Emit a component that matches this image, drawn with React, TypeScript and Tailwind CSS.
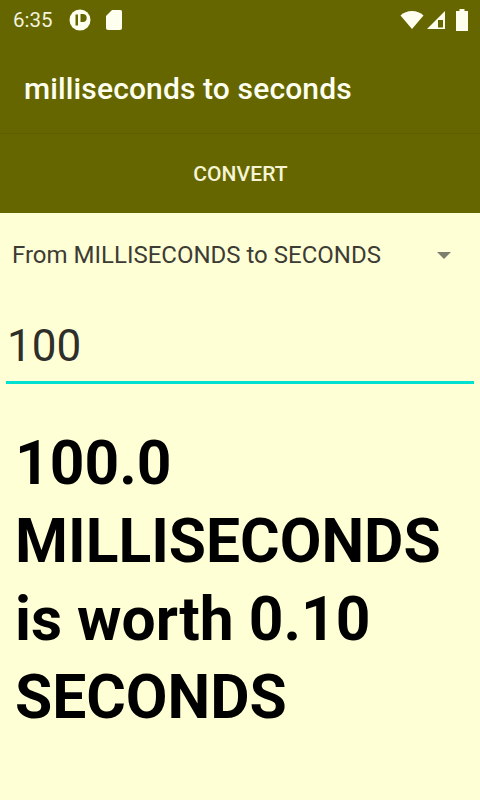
import { useState } from 'react';

const ROBOTO = "font-['Roboto',sans-serif]";

function StatusBar() {
  return (
    <div className="flex h-[40px] items-center justify-between pl-[12px] pr-[11px]">
      <div className="flex items-center">
        <span className="pl-[1px] text-[20.500px] leading-none text-[#f3f3df]">6:35</span>
        <svg className="ml-[16px]" width="22" height="22" viewBox="0 0 22 22">
          <circle cx="11" cy="11" r="10.500" fill="#fffff0" />
          <path d="M6.500 5.500h2.500v11H6.500z" fill="#666600" />
          <path d="M11.500 5h2.200a4 4 0 0 1 0 8h-2.200z" fill="#666600" />
        </svg>
        <svg className="ml-[14px]" width="18" height="22" viewBox="0 0 18 22">
          <path d="M7 1h8.500A1.500 1.500 0 0 1 17 2.500V19a2 2 0 0 1-2 2H3a2 2 0 0 1-2-2V7z" fill="#fffff0" />
        </svg>
      </div>
      <div className="flex items-center">
        <svg width="24" height="20" viewBox="0 0 24 20">
          <path d="M0.500 5.500C3.500 2.500 7.500 1 12 1s8.500 1.500 11.500 4.500L12 19z" fill="#fffff0" />
        </svg>
        <svg className="ml-[2px]" width="20" height="20" viewBox="0 0 20 20">
          <path d="M1 19 19 1v18z" fill="#fffff0" />
          <path d="M12 10h5v7.500h-5z" fill="#666600" />
        </svg>
        <svg className="ml-[9px]" width="14" height="24" viewBox="0 0 14 24">
          <path d="M4.500 1h5v2H13v20H1V3h3.500z" fill="#fffff0" />
        </svg>
      </div>
    </div>
  );
}

export default function App() {
  const [value, setValue] = useState('100');

  return (
    <div className={`flex h-[800px] w-[480px] flex-col overflow-hidden bg-[#ffffd6] ${ROBOTO}`}>
      <div className="bg-[#666600]">
        <StatusBar />
        <div className="flex h-[94px] items-center border-b border-[#5f5f00] pt-[5px] pl-[24px]">
          <h1 className="text-[30px] font-medium leading-none tracking-[0.13px] text-[#fffff0]">milliseconds to seconds</h1>
        </div>
        <button className="flex h-[79px] w-full items-center justify-center pl-[1px] pt-[2px] text-[21px] font-medium tracking-[0.1px] text-[#f5f5d5]">
          CONVERT
        </button>
      </div>

      <div className="flex h-[84px] items-center justify-between pl-[12px] pr-[29px]">
        <span className="text-[24px] leading-none text-[#3c3c34]">From MILLISECONDS to SECONDS</span>
        <div className="h-0 w-0 border-x-[7px] border-t-[7px] border-x-transparent border-t-[#7e7e70]" />
      </div>

      <div className="mx-[6px] border-b-[3px] border-[#00e0d0]">
        <input
          value={value}
          onChange={(e) => setValue(e.target.value)}
          className="block h-[84px] w-full bg-transparent pl-[1px] pt-[14px] text-[44px] leading-none text-[#2e2e2a] outline-none"
        />
      </div>

      <p className="px-[15px] pt-[41px] text-[60.500px] font-bold leading-[78px] text-black">
        100.0 MILLISECONDS is worth 0.10 SECONDS
      </p>
    </div>
  );
}
